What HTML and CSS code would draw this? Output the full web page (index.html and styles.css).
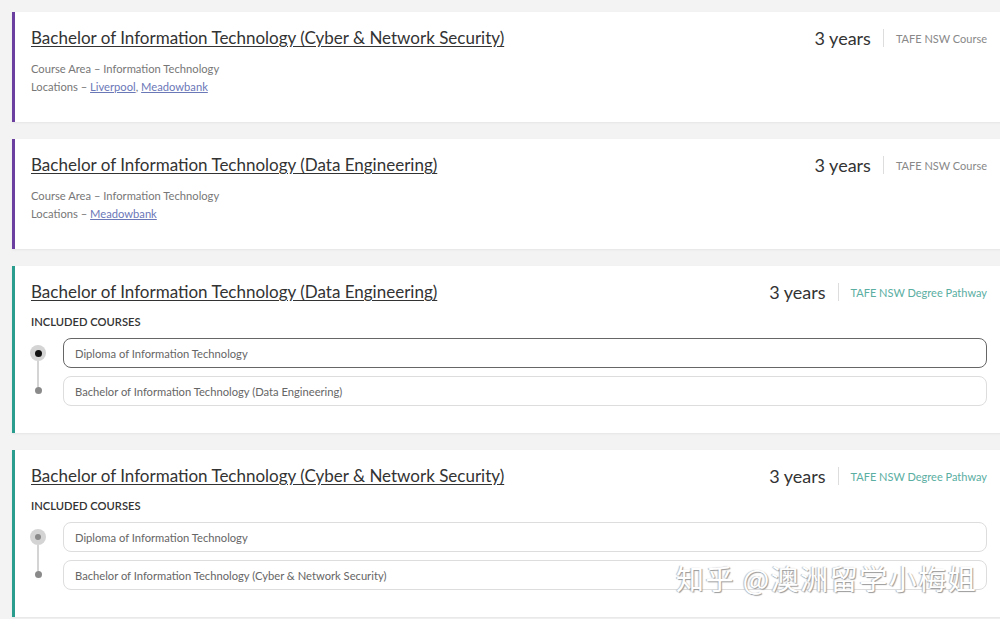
FILE: index.html
```html
<!DOCTYPE html>
<html lang="en">
<head>
    <meta charset="UTF-8">
    <meta name="viewport" content="width=device-width, initial-scale=1.0">
    <title>Information Technology Courses</title>
    <link rel="stylesheet" href="styles.css">
</head>
<body>

    <div class="course-list">

        <div class="card card-course">
            <div class="card-head">
                <a href="#" class="course-title">Bachelor of Information Technology (Cyber &amp; Network Security)</a>
                <div class="meta">
                    <span class="duration">3 years</span>
                    <span class="divider"></span>
                    <span class="kind">TAFE NSW Course</span>
                </div>
            </div>
            <div class="details">
                <p>Course Area &ndash; Information Technology</p>
                <p>Locations &ndash; <a href="#">Liverpool</a>, <a href="#">Meadowbank</a></p>
            </div>
        </div>

        <div class="card card-course">
            <div class="card-head">
                <a href="#" class="course-title">Bachelor of Information Technology (Data Engineering)</a>
                <div class="meta">
                    <span class="duration">3 years</span>
                    <span class="divider"></span>
                    <span class="kind">TAFE NSW Course</span>
                </div>
            </div>
            <div class="details">
                <p>Course Area &ndash; Information Technology</p>
                <p>Locations &ndash; <a href="#">Meadowbank</a></p>
            </div>
        </div>

        <div class="card card-pathway">
            <div class="card-head">
                <a href="#" class="course-title">Bachelor of Information Technology (Data Engineering)</a>
                <div class="meta">
                    <span class="duration">3 years</span>
                    <span class="divider"></span>
                    <span class="kind">TAFE NSW Degree Pathway</span>
                </div>
            </div>
            <h4 class="included">INCLUDED COURSES</h4>
            <div class="pathway">
                <div class="track">
                    <span class="node node-active"></span>
                    <span class="track-line"></span>
                    <span class="node-end"></span>
                </div>
                <div class="steps">
                    <div class="step step-selected">Diploma of Information Technology</div>
                    <div class="step">Bachelor of Information Technology (Data Engineering)</div>
                </div>
            </div>
        </div>

        <div class="card card-pathway">
            <div class="card-head">
                <a href="#" class="course-title">Bachelor of Information Technology (Cyber &amp; Network Security)</a>
                <div class="meta">
                    <span class="duration">3 years</span>
                    <span class="divider"></span>
                    <span class="kind">TAFE NSW Degree Pathway</span>
                </div>
            </div>
            <h4 class="included">INCLUDED COURSES</h4>
            <div class="pathway">
                <div class="track">
                    <span class="node"></span>
                    <span class="track-line"></span>
                    <span class="node-end"></span>
                </div>
                <div class="steps">
                    <div class="step">Diploma of Information Technology</div>
                    <div class="step">Bachelor of Information Technology (Cyber &amp; Network Security)</div>
                </div>
            </div>
        </div>

    </div>

    <div class="watermark">知乎 @澳洲留学小梅姐</div>

</body>
</html>
```

FILE: styles.css
```css
body {
    margin: 0;
    background-color: #f3f3f3;
    font-family: Lato, "Liberation Sans", sans-serif;
    color: #333;
    overflow: hidden;
    height: 619px;
    position: relative;
}
.course-list {
    width: 998px;
    margin: 12px 0 0 12px;
    display: flex;
    flex-direction: column;
    gap: 17px;
}
.card {
    background-color: white;
    border-left: 3px solid #6b3fa0;
    padding: 14px 23px 26px 16px;
    box-shadow: 0 1px 2px rgba(0, 0, 0, 0.06);
}
.card-pathway {
    border-left-color: #2a9d8f;
    padding-bottom: 27px;
}
.card-head {
    display: flex;
    justify-content: space-between;
    align-items: center;
    height: 24px;
}
.course-title {
    font-size: 17px;
    line-height: 24px;
    color: #333;
    text-decoration: underline;
    text-underline-offset: 2px;
}
.meta {
    display: flex;
    align-items: center;
}
.duration {
    font-size: 18px;
    color: #333;
}
.divider {
    width: 1px;
    height: 18px;
    background-color: #ddd;
    margin: 0 12px;
}
.kind {
    font-size: 11px;
    color: #888;
}
.card-pathway .kind {
    color: #5aaea2;
}
.details {
    margin-top: 10px;
}
.details p {
    margin: 0;
    font-size: 11.2px;
    line-height: 18px;
    color: #777;
}
.details a {
    color: #6b78b8;
}
.included {
    margin: 9px 0 0 0;
    font-size: 11.2px;
    line-height: 18px;
    font-weight: 600;
    color: #333;
}
.pathway {
    display: flex;
    gap: 17px;
    margin-top: 7px;
}
.track {
    width: 16px;
    margin-left: -1px;
    display: flex;
    flex-direction: column;
    align-items: center;
    padding: 7px 0 12px 0;
}
.node {
    width: 16px;
    height: 16px;
    border-radius: 50%;
    background-color: #d4d4d4;
    display: flex;
    align-items: center;
    justify-content: center;
}
.node::after {
    content: "";
    width: 6px;
    height: 6px;
    border-radius: 50%;
    background-color: #8a8a8a;
}
.node-active::after {
    width: 7px;
    height: 7px;
    background-color: #111;
}
.track-line {
    width: 2px;
    flex: 1;
    background-color: #d4d4d4;
}
.node-end {
    width: 7px;
    height: 7px;
    border-radius: 50%;
    background-color: #8a8a8a;
}
.steps {
    flex: 1;
    display: flex;
    flex-direction: column;
    gap: 8px;
}
.step {
    height: 30px;
    box-sizing: border-box;
    border: 1px solid #ddd;
    border-radius: 8px;
    padding: 0 11px;
    display: flex;
    align-items: center;
    font-size: 11.2px;
    color: #666;
}
.step-selected {
    border-color: #666;
}
.watermark {
    position: absolute;
    left: 676px;
    top: 561px;
    font-family: "Noto Sans CJK SC", sans-serif;
    font-size: 28px;
    line-height: 34px;
    color: #fff;
    text-shadow: 1px 1px 1px #999, -1px 0 1px #bbb;
    letter-spacing: 1.5px;
}
```
